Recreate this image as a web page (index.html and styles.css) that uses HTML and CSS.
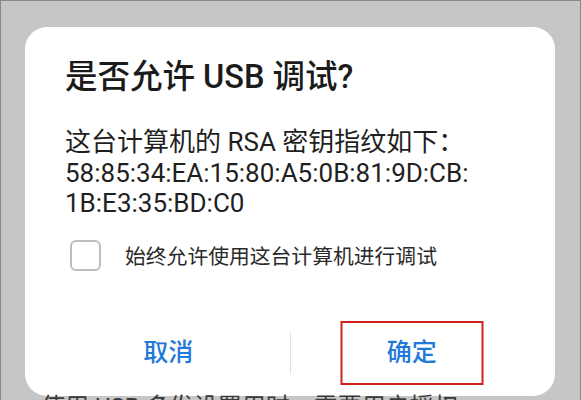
FILE: index.html
```html
<!DOCTYPE html>
<html>
  <head>
    <meta charset="utf-8">
    <title>USB 调试</title>
    <link rel="stylesheet" href="styles.css">
  </head>
  <body>
    <div class="screen">
      <div class="dialog">
        <h1 class="title">是否允许 USB 调试?</h1>
        <p class="message">这台计算机的 RSA 密钥指纹如下：<br>58:85:34:EA:15:80:A5:0B:81:9D:CB:<br>1B:E3:35:BD:C0</p>
        <label class="check-row">
          <span class="checkbox"></span>
          <span class="check-text">始终允许使用这台计算机进行调试</span>
        </label>
        <div class="buttons">
          <a class="btn" href="#">取消</a>
          <span class="divider"></span>
          <a class="btn btn-ok" href="#">确定<span class="mark"></span></a>
        </div>
      </div>
      <p class="behind">使用 USB 多发设置用时，需要用户授权</p>
    </div>
  </body>
</html>
```

FILE: styles.css
```css
*, *::before, *::after {
  padding: 0;
  margin: 0;
  border: 0;
  box-sizing: border-box;
}

html, body {height: 100%; overflow: hidden;}
body {font-family: Roboto, "Noto Sans CJK SC", sans-serif; background: #c6c6c6;}

.screen {height: 400px; border: 1px solid #8a8a8a; border-bottom: 0; padding: 26px 25px 0 24px; overflow: hidden;}

.dialog {background: #fff; border-radius: 22px; padding: 30px 22px 11px 40px;}
.title {font-size: 32.5px; font-weight: 500; line-height: 40px; color: #1b1b1b;}
.message {margin-top: 30px; font-size: 26px; line-height: 30.5px; color: #1f1f1f;}

.check-row {display: flex; align-items: center; margin: 21px 0 0 5px; height: 31px;}
.checkbox {width: 31px; height: 31px; border: 2px solid #bdbdbd; border-radius: 6px;}
.check-text {margin-left: 24px; font-size: 20.8px; color: #2a2a2a;}

.buttons {display: flex; align-items: center; margin: 50px 0 0 -18px; height: 64px;}
.btn {flex: 1; text-align: center; font-size: 25px; font-weight: 500; color: #2379d9; text-decoration: none; line-height: 64px;}
.divider {width: 1px; height: 42px; background: #e2e2e2;}
.btn-ok {position: relative;}
.btn-ok .mark {position: absolute; top: 0; bottom: 0; left: 50%; width: 143px; transform: translateX(-50%); border: 2px solid #d1221d;}

.behind {padding-left: 16px; font-size: 24px; line-height: 22px; color: #3a3a3a;}
```
